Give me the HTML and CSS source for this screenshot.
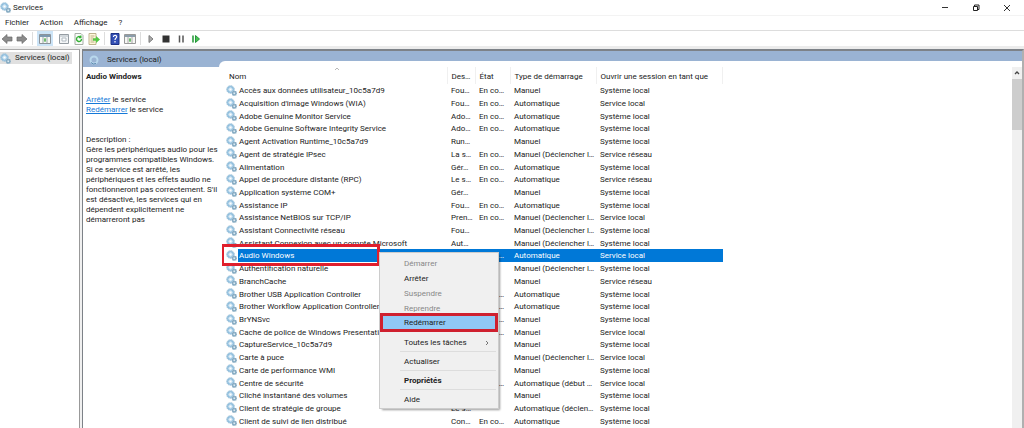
FILE: index.html
```html
<!DOCTYPE html>
<html lang="fr">
<head>
<meta charset="utf-8">
<title>Services</title>
<link rel="stylesheet" href="styles.css">
</head>
<body>
<svg class="sprite" aria-hidden="true">
  <symbol id="gear" viewBox="0 0 22 22">
    <circle cx="9" cy="9" r="7.600" fill="#b5d4e8" stroke="#8fb9d3" stroke-width="1.800" stroke-dasharray="2.4 1.2"/>
    <circle cx="9" cy="9" r="5.400" fill="#d3e8f4" stroke="#72acd6" stroke-width="1.600"/>
    <circle cx="9" cy="9" r="2.600" fill="#fff" stroke="#b4d4e8" stroke-width="1"/>
    <path d="M12 12h9v9h-9z" fill="#a6c2d4"/>
    <circle cx="16.500" cy="16.500" r="4" fill="#94b7cd" stroke="#7198b2" stroke-width="1.600" stroke-dasharray="2 1"/>
    <circle cx="16.500" cy="16.500" r="1.600" fill="#e8f3f9"/>
  </symbol>
</svg>
<div class="window">
  <header class="titlebar">
    <svg class="icon"><use href="#gear"/></svg>
    <h1 class="title">Services</h1>
    <div class="controls">
      <button aria-label="Réduire"><svg viewBox="0 0 10 10"><path d="M2 4.500h6" stroke="#333" fill="none"/></svg></button>
      <button aria-label="Restaurer"><svg viewBox="0 0 10 10"><path d="M2.500 3.500h4v4h-4zM3.500 3.500v-1.500h4.500v4.500h-1.500" stroke="#222" fill="none"/></svg></button>
      <button aria-label="Fermer"><svg viewBox="0 0 10 10"><path d="M2 2l6 6M8 2l-6 6" stroke="#333" fill="none"/></svg></button>
    </div>
  </header>
  <nav class="menubar">
    <button>Fichier</button><button>Action</button><button>Affichage</button><button>?</button>
  </nav>
  <div class="toolbar">
    <button aria-label="Précédent"><svg viewBox="0 0 12 12"><path d="M1 6l5-4.500v2.500h5v4h-5v2.500z" fill="#8b8b8b" stroke="#6c6c6c" stroke-width=".7"/></svg></button>
    <button aria-label="Suivant"><svg viewBox="0 0 12 12"><path d="M11 6l-5-4.500v2.500h-5v4h5v2.500z" fill="#8b8b8b" stroke="#6c6c6c" stroke-width=".7"/></svg></button>
    <span class="divider"></span>
    <button class="pressed" aria-label="Arborescence"><svg viewBox="0 0 12 12"><path d="M.5 1.500h11v9h-11z" fill="#f7f7f4" stroke="#8b9299"/><path d="M1 2h10v2h-10z" fill="#7c98b0"/><path d="M4 4v6M8 4v6" stroke="#9aa"/><path d="M6 5v4M5 7h2" stroke="#4a4"/></svg></button>
    <button class="after" aria-label="Propriétés"><svg viewBox="0 0 12 12"><path d="M1.500 1.500h9v9h-9z" fill="#f3f5f6" stroke="#959ca2"/><path d="M1.500 3h9M4 5h4v3H4z" stroke="#b1bac1" fill="#fff"/></svg></button>
    <button aria-label="Actualiser"><svg viewBox="0 0 12 12"><path d="M2 .5h6l2 2v9h-8z" fill="#fafcf9" stroke="#a6aea6"/><path d="M8.500 6a2.500 2.500 0 1 1-1-2M7.800 2.500v2h-2" fill="none" stroke="#35b135" stroke-width="1.400"/></svg></button>
    <button aria-label="Exporter la liste"><svg viewBox="0 0 12 12"><path d="M1 .5h7v11H1z" fill="#fff8dc" stroke="#bdb38e"/><path d="M2.500 3h4M2.500 5h3M2.500 7h3M2.500 9h4" stroke="#aa9d6e" stroke-width=".8"/><path d="M5 5.200h3V3l4 3.500-4 3.500V7.800H5z" fill="#55c844"/></svg></button>
    <span class="divider"></span>
    <button aria-label="Aide"><svg viewBox="0 0 12 12"><path d="M2 .5h8v11H2z" fill="#3450b5" stroke="#1d3286"/><path d="M4.500 4c0-2.500 3.500-2 3.200 0-.2 1.200-1.700 1.300-1.700 3M6 8v1.400" fill="none" stroke="#fff" stroke-width="1.200"/></svg></button>
    <button aria-label="Volet Actions"><svg viewBox="0 0 12 12"><path d="M.5 1.500h11v9h-11z" fill="#f7f7f4" stroke="#999"/><path d="M1 2h10v2h-10z" fill="#8c9dab"/><path d="M4 4v6M8 4v6" stroke="#aaa"/><path d="M6 5v4M5 7h2" stroke="#4a4"/></svg></button>
    <span class="divider"></span>
    <button aria-label="Démarrer"><svg viewBox="0 0 12 12"><path d="M4 2.500l4 3.500-4 3.500z" fill="#ababab" stroke="#7d7d7d"/></svg></button>
    <button aria-label="Arrêter"><svg viewBox="0 0 12 12"><path d="M2.500 2.500h7v7h-7z" fill="#333"/></svg></button>
    <button aria-label="Suspendre"><svg viewBox="0 0 12 12"><path d="M4.500 2.500v7M8 2.500v7" stroke="#555" stroke-width="1.500"/></svg></button>
    <button aria-label="Redémarrer"><svg viewBox="0 0 12 12"><path d="M3 2.500v7" stroke="#2c9c3f" stroke-width="1.600"/><path d="M5.500 2.500l4 3.500-4 3.500z" fill="#48c451" stroke="#24973a"/></svg></button>
  </div>
  <main class="workspace">
    <aside class="tree"><button class="node"><svg class="icon"><use href="#gear"/></svg>Services (local)</button></aside>
    <div class="pane">
      <div class="body">
        <section class="details">
          <div class="banner"><svg viewBox="0 0 12 12"><circle cx="6" cy="6" r="3.500" fill="none" stroke="#b9d8ec" stroke-width="2"/><path d="M3 8.500a4 4 0 0 0 5 1" stroke="#5e8bb0" fill="none"/></svg>Services (local)</div>
          <h2>Audio Windows</h2>
          <p class="actions"><a href="#">Arrêter</a> le service<br><a href="#">Redémarrer</a> le service</p>
          <p class="description">Description :<br>Gère les périphériques audio pour les<br>programmes compatibles Windows.<br>Si ce service est arrêté, les<br>périphériques et les effets audio ne<br>fonctionneront pas correctement. S'il<br>est désactivé, les services qui en<br>dépendent explicitement ne<br>démarreront pas</p>
        </section>
        <section class="list">
          <div class="scroller">
            <table class="services">
              <colgroup><col class="c-name"><col class="c-desc"><col class="c-state"><col class="c-type"><col class="c-logon"></colgroup>
              <thead><tr><th>Nom<svg class="sort" viewBox="0 0 6 4"><path d="M1 3l2-2 2 2" fill="none" stroke="#999" stroke-width=".7"/></svg></th><th>Des…</th><th>État</th><th>Type de démarrage</th><th>Ouvrir une session en tant que</th></tr></thead>
              <tbody id="rows"></tbody>
            </table>
          </div>
          <div class="scrollbar"><button aria-label="Défiler vers le haut"><svg viewBox="0 0 10 10"><path d="M3 6l2-2 2 2" fill="none" stroke="#444" stroke-width="1.300"/></svg></button><div class="thumb"></div></div>
        </section>
      </div>
    </div>
  </main>
  <div class="context" role="menu">
    <button role="menuitem" disabled>Démarrer</button>
    <button role="menuitem">Arrêter</button>
    <button role="menuitem" disabled>Suspendre</button>
    <button role="menuitem" disabled>Reprendre</button>
    <button role="menuitem" class="active">Redémarrer</button>
    <hr class="hidden">
    <button role="menuitem">Toutes les tâches<svg viewBox="0 0 6 6"><path d="M2 1l2 2-2 2" fill="none" stroke="#555" stroke-width=".8"/></svg></button>
    <hr>
    <button role="menuitem">Actualiser</button>
    <hr>
    <button role="menuitem" class="default">Propriétés</button>
    <hr>
    <button role="menuitem">Aide</button>
  </div>
</div>
<script src="services.js"></script>
</body>
</html>
```
FILE: styles.css
```css
* { box-sizing: border-box; }
body {
  margin: 0;
  font: 8px/10px Roboto, "Noto Sans", sans-serif;
  color: #222;
  background: #fff;
}
button {
  border: 0;
  padding: 0;
  background: none;
  font: inherit;
  color: inherit;
}
svg { display: block; flex: none; }
.sprite { position: absolute; width: 0; height: 0; }
.icon { width: 11px; height: 11px; }

.window {
  height: 100vh;
  display: flex;
  flex-direction: column;
  overflow: hidden;
}
.titlebar {
  height: 16px;
  flex: none;
  display: flex;
  align-items: center;
  border-bottom: 1px solid #f3f3f3;
}
.title { margin: 0 0 0 2px; font-size: 8px; font-weight: 400; }
.controls { margin-left: auto; display: flex; gap: 21px; padding-right: 12px; }
.controls svg { width: 10px; height: 10px; }
.menubar {
  height: 15px;
  flex: none;
  display: flex;
  align-items: center;
  gap: 11px;
  padding-left: 5px;
  border-bottom: 1px solid #ddd;
}
.toolbar {
  height: 15px;
  flex: none;
  display: flex;
  align-items: center;
  gap: 3px;
  padding-left: 1px;
}
.toolbar svg { width: 12px; height: 12px; }
.toolbar .after { margin-left: 2px; }
.toolbar .pressed {
  align-self: stretch;
  padding: 0 2px;
  background: #cce4f7;
}
.divider { width: 1px; height: 13px; background: #ddd; margin: 0 1px; }

.workspace {
  flex: 1;
  min-height: 0;
  display: flex;
  gap: 2px;
  border-top: 3px solid #ececec;
  background: #f0f0f0;
}
.tree {
  width: 80px;
  flex: none;
  padding-top: 2px;
  background: #fff;
  border-top: 1px solid #aaa;
  border-right: 1px solid #999;
}
.node {
  display: flex;
  align-items: center;
  gap: 4px;
  height: 12px;
  padding-right: 2px;
  background: #e0e0e0;
}
.pane {
  flex: 1;
  min-width: 0;
  padding-top: 10px;
  background: #9ab3d3;
  border: 2px solid #7d8288;
  border-width: 2px 2px 0 1px;
  border-right-color: #b0b0b0;
}
.body {
  height: 100%;
  display: flex;
  background: linear-gradient(#9ab3d3 6px, #fff 6px);
}
.details { width: 136px; flex: none; padding-left: 3px; white-space: nowrap; }
.banner {
  display: flex;
  align-items: center;
  gap: 7px;
  height: 16px;
  margin: -10px 0 0 -3px;
  padding: 1px 0 0 5px;
}
.banner svg { width: 12px; height: 12px; }
.details h2 { margin: 5px 0 13px; font-size: 8px; line-height: 10px; }
.details p { margin: 0; }
.details .description { margin-top: 20px; }
a { color: #1679d8; text-decoration: underline; }

.list {
  flex: 1;
  min-width: 0;
  display: flex;
  padding: 6px 0 0 3px;
  background: #fff;
  border-top-left-radius: 6px;
}
.scroller { flex: 1; min-width: 0; overflow: hidden; }
.services {
  width: 501px;
  height: 360px;
  table-layout: fixed;
  border-collapse: collapse;
}
.c-name { width: 225px; }
.c-desc { width: 28px; }
.c-state { width: 35px; }
.c-type { width: 86px; }
.services th, .services td {
  padding: 2px 0 0 4px;
  text-align: left;
  font-weight: 400;
  white-space: nowrap;
  line-height: 10px;
}
.services th {
  position: relative;
  height: 17px;
  padding-top: 3px;
  border-right: 1px solid #f0f0f0;
}
.services th:first-child { padding-left: 7px; }
.sort { position: absolute; top: 0; left: 50%; width: 6px; height: 4px; }
.name { display: flex; align-items: center; gap: 2px; height: 10px; }
.name .icon { margin-top: -2px; }
.selected { color: #fff; background: linear-gradient(90deg, #fff 16px, #0078d7 16px); }
.selected .name { position: relative; }
.selected .name::after {
  content: "";
  position: absolute;
  inset: -7px 67px -5px -5px;
  border: 3px solid #df1f2d;
}
.scrollbar { width: 10px; flex: none; background: #f0f0f0; }
.scrollbar button { display: block; height: 12px; width: 100%; }
.scrollbar svg { width: 10px; height: 10px; }
.thumb { height: 51px; background: #cdcdcd; }

.context {
  position: absolute;
  top: 253px;
  left: 380px;
  width: 118px;
  padding: 3px 0 1px;
  background: #f0f0f0;
  box-shadow: 0 0 0 1px #ccc, 2px 2px 2px #0006;
}
.context button {
  display: flex;
  align-items: center;
  justify-content: space-between;
  width: 100%;
  height: 15px;
  padding: 0 8px 0 24px;
}
.context button:disabled { color: #888; }
.context .active {
  height: 19px;
  margin: -3px 0 -1px;
  padding-left: 21px;
  background: #90c8f6;
  border: 3px solid #cf202f;
}
.context .default { font-weight: 700; }
.context svg { width: 6px; height: 6px; }
.context hr {
  height: 1px;
  margin: 1px 2px 2px 20px;
  border: 0;
  background: #ddd;
}
.context .hidden { visibility: hidden; }
```
FILE: services.js
```js
const M = "Manuel", A = "Automatique", D = "Manuel (Déclencher l…";
const SL = "Système local", VL = "Service local", VR = "Service réseau", R = "En co…";
const services = [
  ["Accès aux données utilisateur_10c5a7d9", "Fou…", R, M, SL],
  ["Acquisition d'image Windows (WIA)", "Fou…", R, A, VL],
  ["Adobe Genuine Monitor Service", "Ado…", R, A, SL],
  ["Adobe Genuine Software Integrity Service", "Ado…", R, A, SL],
  ["Agent Activation Runtime_10c5a7d9", "Run…", "", M, SL],
  ["Agent de stratégie IPsec", "La s…", R, D, VR],
  ["Alimentation", "Gér…", R, A, SL],
  ["Appel de procédure distante (RPC)", "Le s…", R, A, VR],
  ["Application système COM+", "Gér…", "", M, SL],
  ["Assistance IP", "Fou…", R, A, SL],
  ["Assistance NetBIOS sur TCP/IP", "Pren…", R, D, VL],
  ["Assistant Connectivité réseau", "Fou…", "", D, SL],
  ["Assistant Connexion avec un compte Microsoft", "Aut…", "", D, SL],
  ["Audio Windows", "Gère…", R, A, VL],
  ["Authentification naturelle", "", "", D, SL],
  ["BranchCache", "", "", M, VR],
  ["Brother USB Application Controller", "", R, A, SL],
  ["Brother Workflow Application Controller", "", R, A, SL],
  ["BrYNSvc", "", R, M, SL],
  ["Cache de police de Windows Presentation", "", R, M, VL],
  ["CaptureService_10c5a7d9", "", "", M, SL],
  ["Carte à puce", "", "", D, VL],
  ["Carte de performance WMI", "", "", M, SL],
  ["Centre de sécurité", "", R, "Automatique (début …", VL],
  ["Cliché instantané des volumes", "", "", M, SL],
  ["Client de stratégie de groupe", "Le s…", "", "Automatique (déclen…", SL],
  ["Client de suivi de lien distribué", "Con…", R, A, SL]
];
document.getElementById("rows").innerHTML = services.map(([name, ...rest]) =>
  `<tr${name === "Audio Windows" ? ' class="selected"' : ""}>` +
  `<td><div class="name"><svg class="icon"><use href="#gear"/></svg>${name}</div></td>` +
  rest.map(text => `<td>${text}</td>`).join("") + "</tr>"
).join("");
```
